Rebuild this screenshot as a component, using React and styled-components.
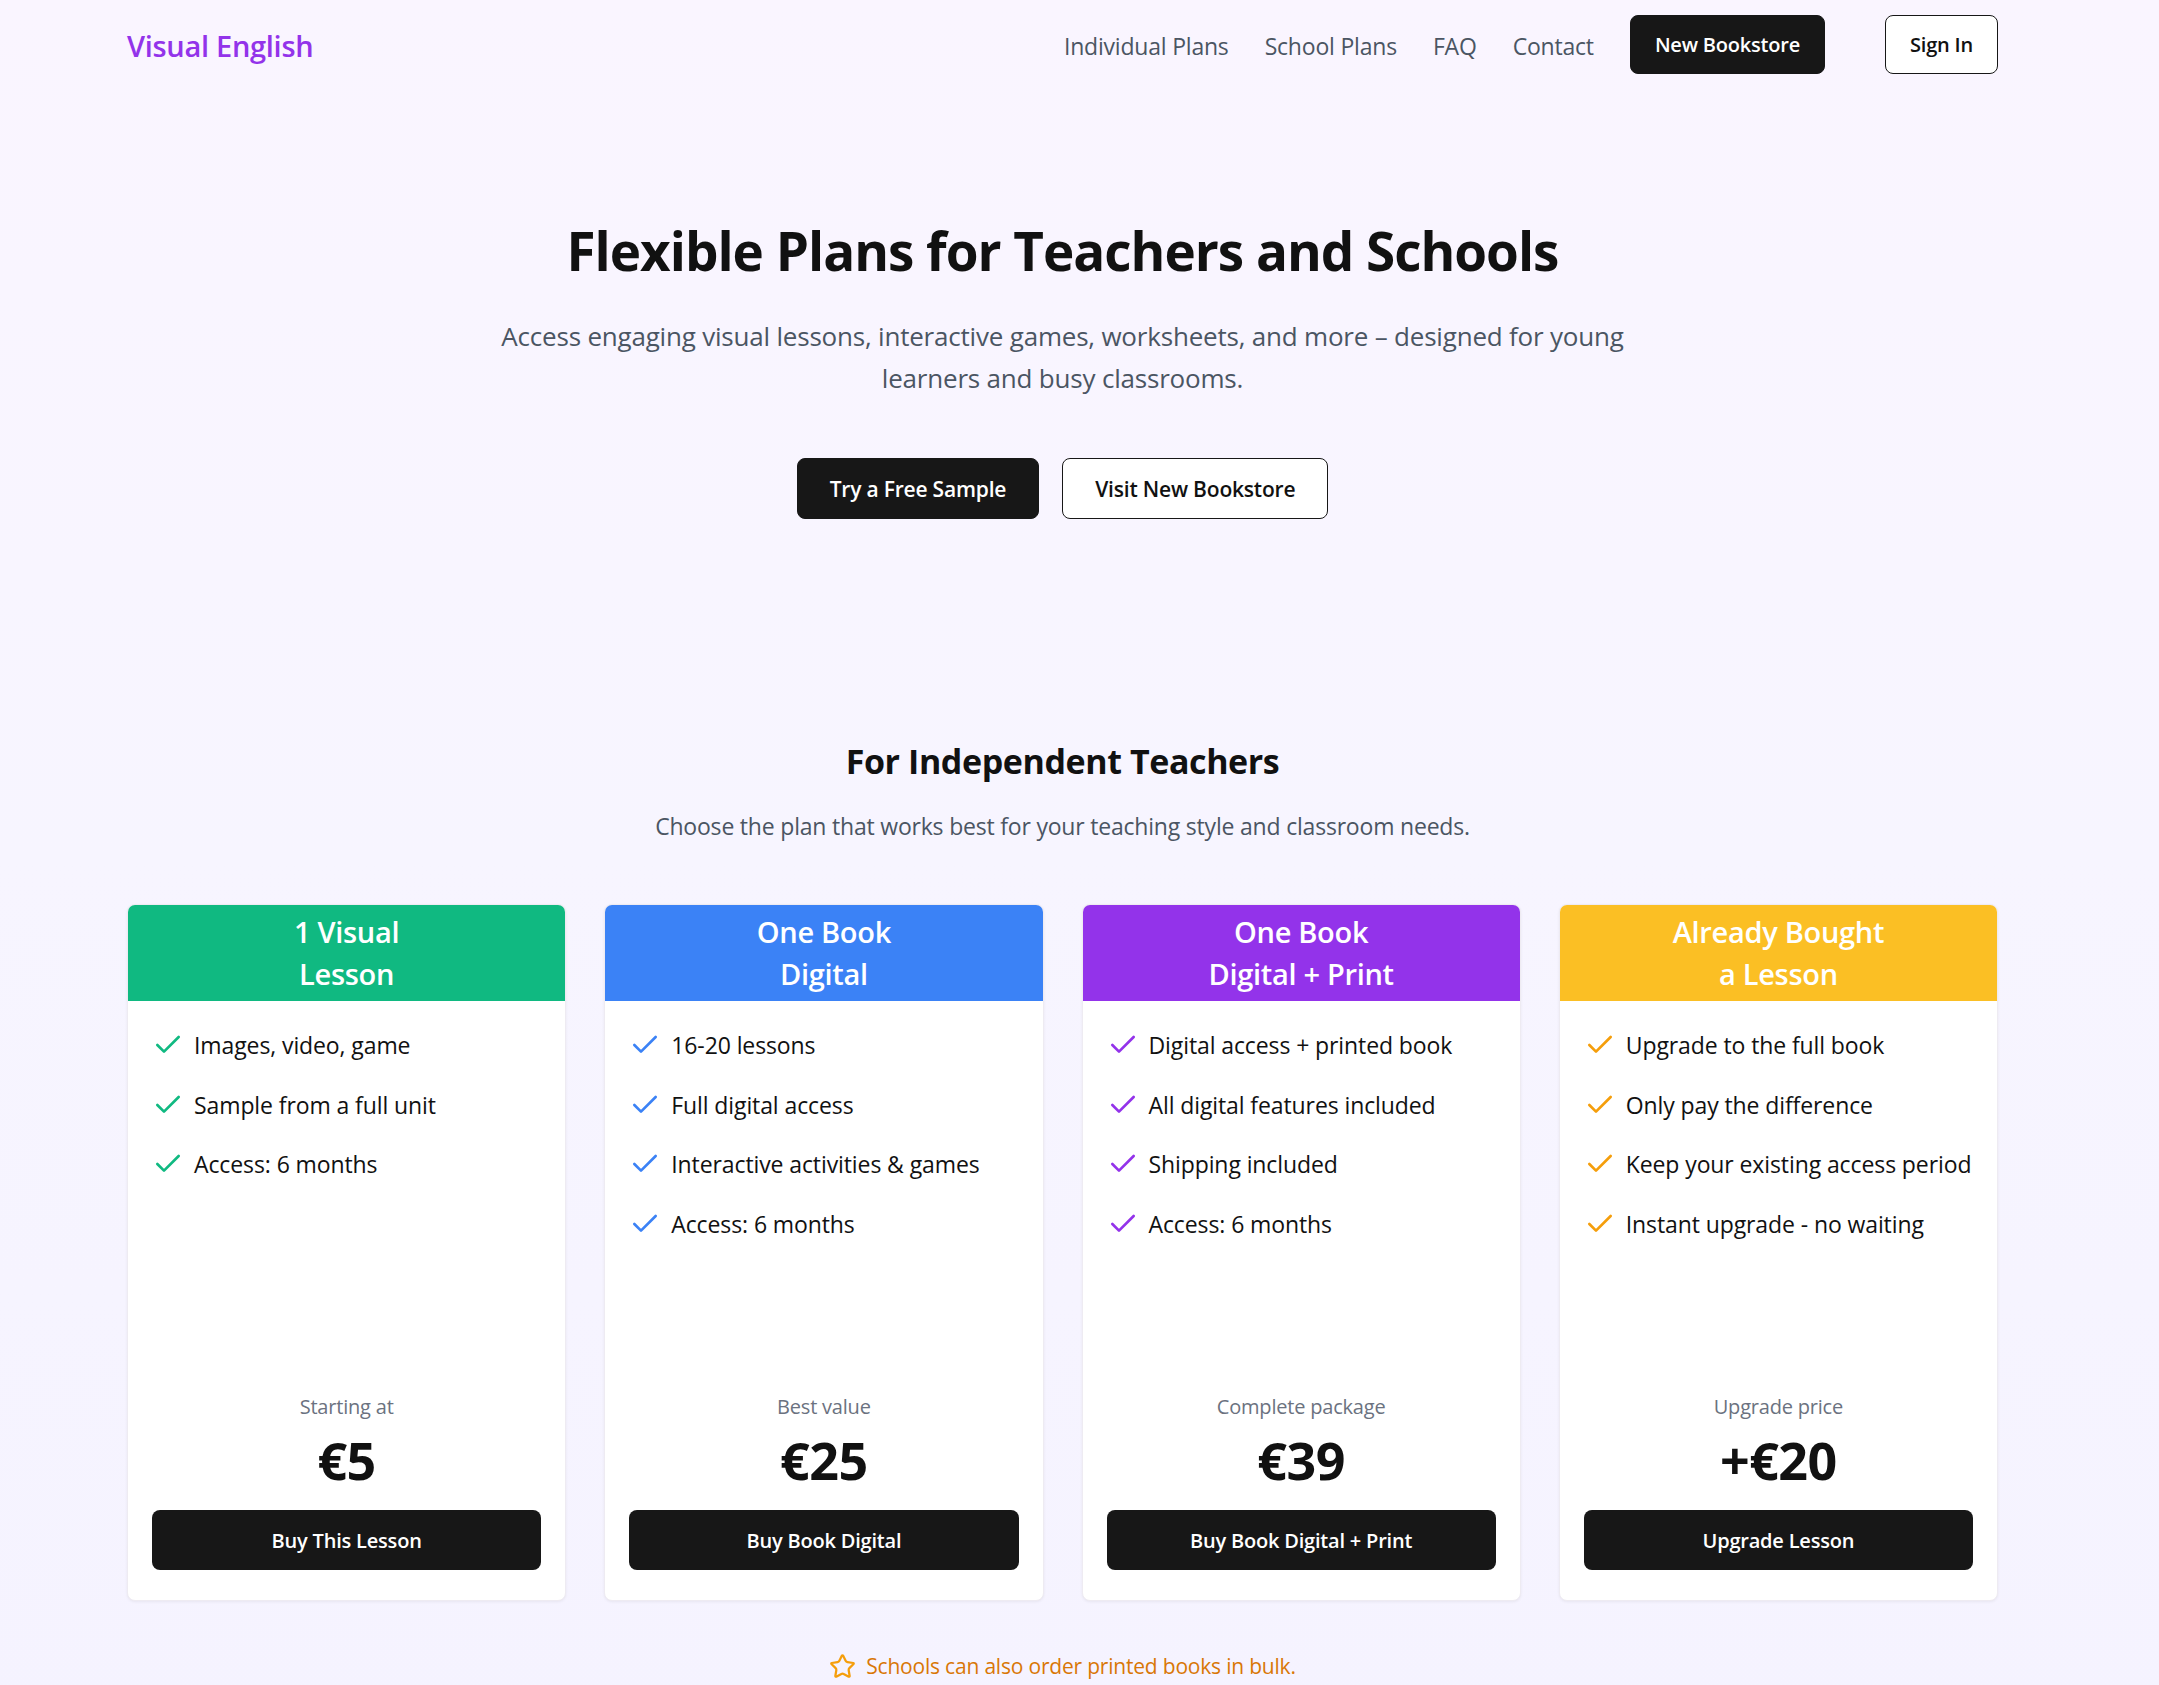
import React from 'react';
import styled, { createGlobalStyle } from 'styled-components';

const GlobalStyle = createGlobalStyle`
  body {
    margin: 0;
    font-family: "Open Sans", "Noto Sans", sans-serif;
    color: #111111;
    background: linear-gradient(to bottom, #faf5ff 0%, #f7f5ff 50%, #f5f3ff 100%);
    min-height: 100vh;
  }
  * { box-sizing: border-box; }
`;

const plans = [
  {
    title: ['1 Visual', 'Lesson'],
    color: '#10b981',
    check: '#10b981',
    features: ['Images, video, game', 'Sample from a full unit', 'Access: 6 months'],
    label: 'Starting at',
    price: '€5',
    cta: 'Buy This Lesson',
  },
  {
    title: ['One Book', 'Digital'],
    color: '#3b82f6',
    check: '#3b82f6',
    features: ['16-20 lessons', 'Full digital access', 'Interactive activities & games', 'Access: 6 months'],
    label: 'Best value',
    price: '€25',
    cta: 'Buy Book Digital',
  },
  {
    title: ['One Book', 'Digital + Print'],
    color: '#9333ea',
    check: '#9333ea',
    features: ['Digital access + printed book', 'All digital features included', 'Shipping included', 'Access: 6 months'],
    label: 'Complete package',
    price: '€39',
    cta: 'Buy Book Digital + Print',
  },
  {
    title: ['Already Bought', 'a Lesson'],
    color: '#fbbf24',
    check: '#f59e0b',
    features: ['Upgrade to the full book', 'Only pay the difference', 'Keep your existing access period', 'Instant upgrade - no waiting'],
    label: 'Upgrade price',
    price: '+€20',
    cta: 'Upgrade Lesson',
  },
];

function CheckIcon({ color }) {
  return (
    <CheckSvg viewBox="0 0 24 24" fill="none" stroke={color} strokeWidth="2" strokeLinecap="round" strokeLinejoin="round">
      <path d="M20 6 9 17l-5-5" />
    </CheckSvg>
  );
}

function StarIcon() {
  return (
    <StarSvg viewBox="0 0 24 24" fill="none" stroke="#f59e0b" strokeWidth="2" strokeLinecap="round" strokeLinejoin="round">
      <path d="M11.525 2.295a.53.53 0 0 1 .95 0l2.31 4.679a2.123 2.123 0 0 0 1.595 1.16l5.166.756a.53.53 0 0 1 .294.904l-3.736 3.638a2.123 2.123 0 0 0-.611 1.878l.882 5.14a.53.53 0 0 1-.771.56l-4.618-2.428a2.122 2.122 0 0 0-1.973 0L6.396 21.01a.53.53 0 0 1-.77-.56l.881-5.139a2.122 2.122 0 0 0-.611-1.879L2.16 9.795a.53.53 0 0 1 .294-.906l5.165-.755a2.122 2.122 0 0 0 1.597-1.16z" />
    </StarSvg>
  );
}

export default function App() {
  return (
    <>
      <GlobalStyle />
      <Container>
        <Nav>
          <Logo>Visual English</Logo>
          <NavLinks>
            <NavLink>Individual Plans</NavLink>
            <NavLink>School Plans</NavLink>
            <NavLink>FAQ</NavLink>
            <NavLink>Contact</NavLink>
            <Button $dark $small>New Bookstore</Button>
            <SignIn>
              <Button $small>Sign In</Button>
            </SignIn>
          </NavLinks>
        </Nav>

        <Hero>
          <HeroTitle>Flexible Plans for Teachers and Schools</HeroTitle>
          <HeroText>
            Access engaging visual lessons, interactive games, worksheets, and more – designed for young learners and busy classrooms.
          </HeroText>
          <HeroButtons>
            <Button $dark>Try a Free Sample</Button>
            <Button>Visit New Bookstore</Button>
          </HeroButtons>
        </Hero>

        <Section>
          <SectionTitle>For Independent Teachers</SectionTitle>
          <SectionText>Choose the plan that works best for your teaching style and classroom needs.</SectionText>
          <Grid>
            {plans.map(plan => (
              <Card key={plan.cta}>
                <CardHeader $color={plan.color}>
                  {plan.title[0]}
                  <br />
                  {plan.title[1]}
                </CardHeader>
                <Features>
                  {plan.features.map(f => (
                    <Feature key={f}>
                      <CheckIcon color={plan.check} />
                      <span>{f}</span>
                    </Feature>
                  ))}
                </Features>
                <CardBottom>
                  <PriceLabel>{plan.label}</PriceLabel>
                  <Price>{plan.price}</Price>
                  <CardButton>{plan.cta}</CardButton>
                </CardBottom>
              </Card>
            ))}
          </Grid>
          <Note>
            <StarIcon />
            Schools can also order printed books in bulk.
          </Note>
        </Section>
      </Container>
    </>
  );
}

const Container = styled.div`
  width: 1871px;
  margin-left: 127px;
`;

const Nav = styled.nav`
  display: flex;
  align-items: center;
  justify-content: space-between;
  padding: 15px 0;
`;

const Logo = styled.div`
  font-size: 29px;
  font-weight: 600;
  color: #9333ea;
  letter-spacing: -0.3px;
  margin-top: 2px;
`;

const NavLinks = styled.div`
  display: flex;
  align-items: center;
  gap: 36px;
`;

const NavLink = styled.a`
  font-size: 23px;
  color: #4b5563;
  cursor: pointer;
  letter-spacing: -0.2px;
  margin-top: 2px;
`;

const SignIn = styled.div`
  margin-left: 24px;
`;

const Button = styled.button`
  font-family: inherit;
  font-size: ${p => (p.$small ? '20px' : '21px')};
  font-weight: 600;
  letter-spacing: -0.2px;
  height: ${p => (p.$small ? '59px' : '61px')};
  padding: 0 ${p => (p.$small ? '24px' : '32px')};
  border-radius: 8px;
  border: 1.5px solid #171717;
  background: ${p => (p.$dark ? '#171717' : '#ffffff')};
  color: ${p => (p.$dark ? '#ffffff' : '#111111')};
  cursor: pointer;
`;

const Hero = styled.section`
  display: flex;
  flex-direction: column;
  align-items: center;
  text-align: center;
  padding-top: 128px;
`;

const HeroTitle = styled.h1`
  margin: 0;
  font-size: 53px;
  line-height: 67px;
  font-weight: 700;
  letter-spacing: -1px;
  color: #111111;
`;

const HeroText = styled.p`
  margin: 31px 0 0;
  max-width: 1150px;
  font-size: 26px;
  line-height: 42px;
  color: #4b5563;
  letter-spacing: -0.2px;
`;

const HeroButtons = styled.div`
  display: flex;
  gap: 23px;
  margin-top: 59px;
`;

const Section = styled.section`
  display: flex;
  flex-direction: column;
  align-items: center;
  padding-top: 219px;
`;

const SectionTitle = styled.h2`
  margin: 0;
  font-size: 34px;
  line-height: 46px;
  font-weight: 700;
  letter-spacing: -0.4px;
`;

const SectionText = styled.p`
  margin: 24px 0 0;
  font-size: 23px;
  line-height: 36px;
  color: #4b5563;
  letter-spacing: -0.2px;
`;

const Grid = styled.div`
  width: 100%;
  margin-top: 60px;
  display: grid;
  grid-template-columns: repeat(4, 1fr);
  gap: 38px;
`;

const Card = styled.div`
  display: flex;
  flex-direction: column;
  min-height: 697px;
  background: #ffffff;
  border: 1px solid #eeebf2;
  border-radius: 8px;
  overflow: hidden;
  box-shadow: 0 1px 3px rgba(0, 0, 0, 0.06);
`;

const CardHeader = styled.div`
  background: ${p => p.$color};
  color: #ffffff;
  text-align: center;
  font-size: 29px;
  line-height: 42px;
  font-weight: 600;
  letter-spacing: -0.3px;
  padding: 6px 16px;
`;

const Features = styled.ul`
  list-style: none;
  margin: 0;
  padding: 27px 16px 0 24px;
  display: flex;
  flex-direction: column;
  gap: 25.5px;
  flex: 1;
`;

const Feature = styled.li`
  display: flex;
  align-items: center;
  gap: 10px;
  font-size: 23px;
  line-height: 34px;
  color: #111111;
  letter-spacing: -0.1px;
  white-space: nowrap;
`;

const CheckSvg = styled.svg`
  width: 32px;
  height: 32px;
  flex-shrink: 0;
`;

const CardBottom = styled.div`
  display: flex;
  flex-direction: column;
  align-items: center;
  padding: 0 24px 30px;
`;

const PriceLabel = styled.div`
  font-size: 20px;
  line-height: 28px;
  color: #6b7280;
  letter-spacing: -0.2px;
`;

const Price = styled.div`
  margin-top: 9px;
  font-size: 52px;
  line-height: 60px;
  font-weight: 700;
  letter-spacing: -0.5px;
`;

const CardButton = styled.button`
  margin-top: 20px;
  width: 100%;
  height: 60px;
  border: none;
  border-radius: 8px;
  background: #171717;
  color: #ffffff;
  font-family: inherit;
  font-size: 20px;
  font-weight: 600;
  letter-spacing: -0.2px;
  cursor: pointer;
`;

const Note = styled.div`
  margin-top: 51px;
  display: flex;
  align-items: center;
  gap: 10px;
  font-size: 21px;
  font-weight: 500;
  color: #d97706;
  letter-spacing: -0.2px;
  padding-bottom: 40px;
`;

const StarSvg = styled.svg`
  width: 27px;
  height: 27px;
`;
